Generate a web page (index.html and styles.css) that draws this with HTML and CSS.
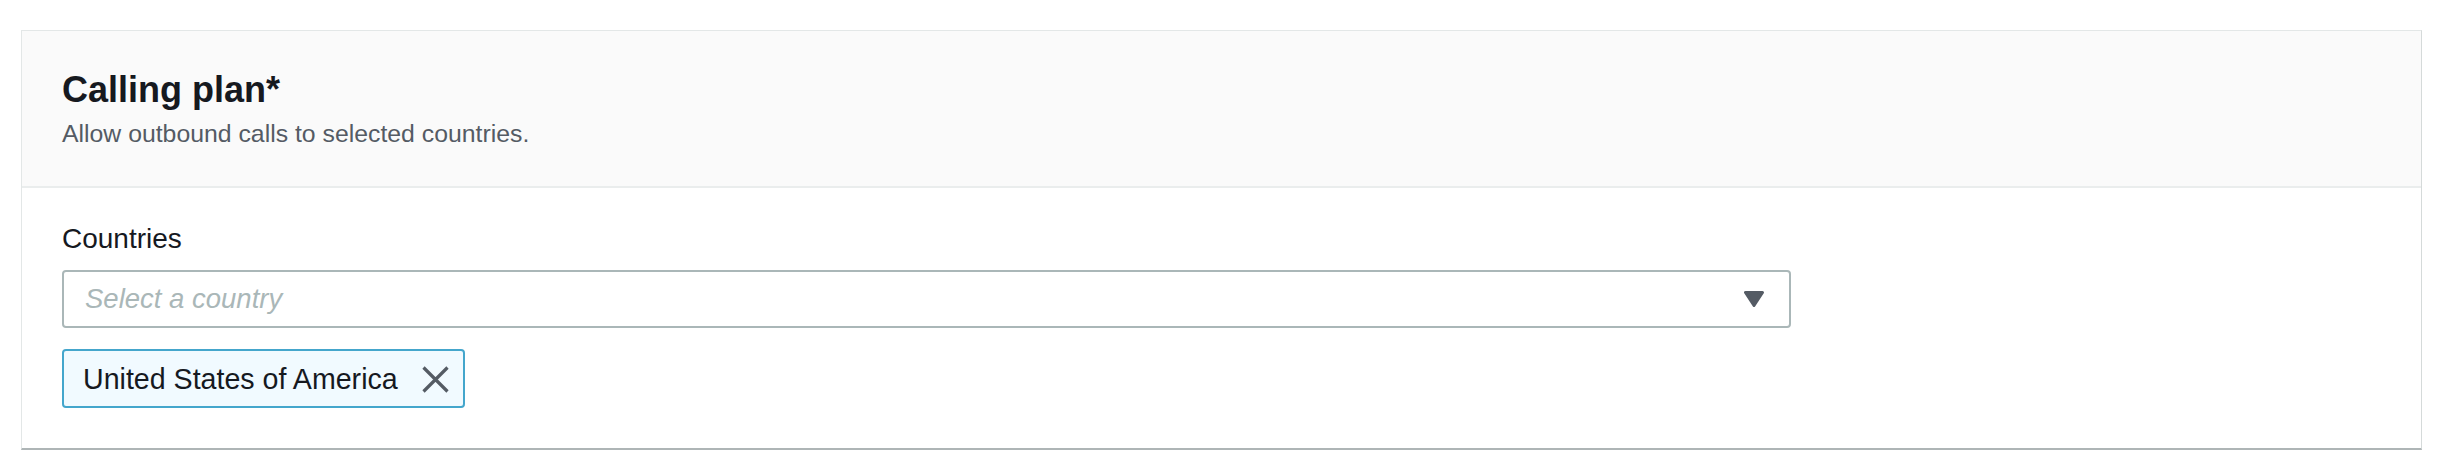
FILE: index.html
```html
<!DOCTYPE html>
<html lang="en">
<head>
<meta charset="utf-8">
<title>Calling plan</title>
<link rel="stylesheet" href="styles.css">
</head>
<body>
  <section class="card">
    <header class="card-header">
      <h2 class="card-title">Calling plan*</h2>
      <p class="card-desc">Allow outbound calls to selected countries.</p>
    </header>
    <div class="card-body">
      <label class="field-label">Countries</label>
      <div class="select">
        <span class="placeholder">Select a country</span>
        <svg class="caret" width="20" height="16" viewBox="0 0 20 16" aria-hidden="true">
          <path d="M1.5 1.5 H18.5 L10 14.5 Z" fill="#545b64" stroke="#545b64" stroke-width="3" stroke-linejoin="round"/>
        </svg>
      </div>
      <div class="tokens">
        <div class="token">
          <span class="token-label">United States of America</span>
          <svg class="token-dismiss" width="27" height="27" viewBox="0 0 27 27" aria-hidden="true">
            <path d="M1.5 1.5 L25.5 25.5 M25.5 1.5 L1.5 25.5" stroke="#545b64" stroke-width="3.2" fill="none"/>
          </svg>
        </div>
      </div>
    </div>
  </section>
</body>
</html>
```

FILE: styles.css
```css
html, body {
  background: #ffffff;
}
body {
  margin: 30px 36px 14px 21px;
  font-family: "Liberation Sans", Arial, sans-serif;
  color: #16191f;
}
.card {
  background: #ffffff;
  border: 1px solid #e3e7e7;
  border-right-color: #d5dada;
  border-bottom: 2px solid #aeb5b6;
  box-shadow: 0 1px 1px 0 rgba(0, 28, 36, 0.25), 1px 0 1px 0 rgba(0, 28, 36, 0.08), -1px 0 1px 0 rgba(0, 28, 36, 0.08);
}
.card-header {
  background: #fafafa;
  padding: 37px 40px 35px;
  border-bottom: 2px solid #eaeded;
}
.card-title {
  margin: 0;
  font-size: 36px;
  line-height: 44px;
  font-weight: 700;
  color: #16191f;
}
.card-desc {
  margin: 5px 0 0;
  font-size: 24.8px;
  line-height: 34px;
  color: #545b64;
}
.card-body {
  padding: 31px 40px 40px;
  display: flex;
  flex-direction: column;
  align-items: flex-start;
}
.field-label {
  font-size: 28px;
  line-height: 40px;
  color: #16191f;
}
.select {
  margin-top: 11px;
  width: 1729px;
  height: 58px;
  box-sizing: border-box;
  border: 2px solid #aab7b8;
  border-radius: 4px;
  display: flex;
  align-items: center;
  justify-content: space-between;
  padding: 0 25px 0 21px;
}
.placeholder {
  font-size: 27.5px;
  line-height: 54px;
  font-style: italic;
  color: #aab7b8;
}
.caret {
  display: block;
}
.tokens {
  margin-top: 21px;
  display: flex;
  gap: 10px;
}
.token {
  display: flex;
  align-items: center;
  box-sizing: border-box;
  height: 59px;
  padding: 1px 14px 0 19px;
  background: #f1faff;
  border: 2px solid #44a6cc;
  border-radius: 4px;
}
.token-label {
  font-size: 28.6px;
  line-height: 54px;
  color: #16191f;
}
.token-dismiss {
  display: block;
  margin-left: 24px;
}
```
